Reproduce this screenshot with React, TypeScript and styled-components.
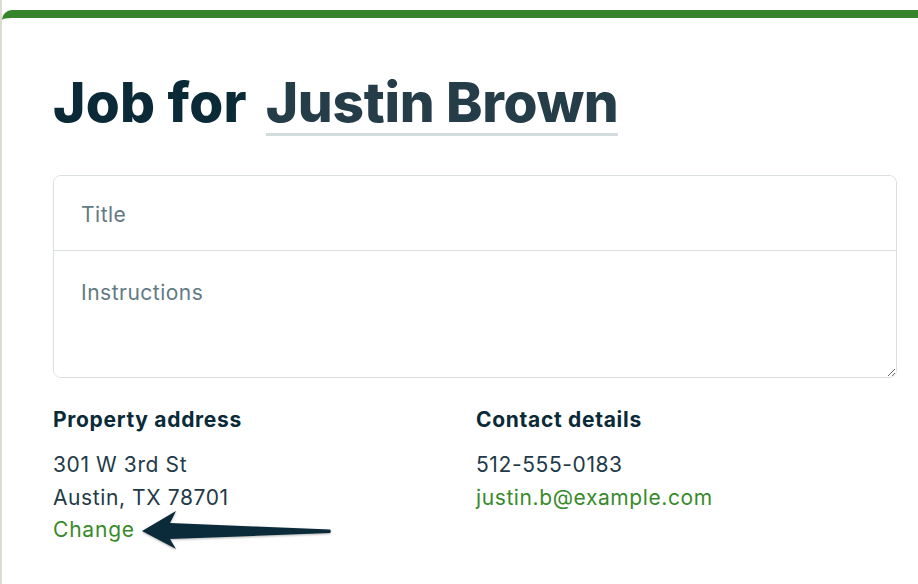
import React from "react";
import styled, { createGlobalStyle } from "styled-components";

const GlobalStyle = createGlobalStyle`
  html, body {
    margin: 0;
    padding: 0;
    background: #ffffff;
  }
  body {
    font-family: Inter, "Noto Sans", "Liberation Sans", sans-serif;
    color: #1f3a48;
  }
  * { box-sizing: border-box; }
`;

const Page = styled.div`
  position: relative;
  min-height: 584px;
  border-left: 2px solid #dddcd3;
  padding-top: 10px;
  overflow: hidden;
`;

const Card = styled.section`
  border-top: 8px solid #36852a;
  border-top-left-radius: 10px;
  padding: 0 21px 40px 51px;
  min-height: 566px;
`;

const Heading = styled.h1`
  display: flex;
  align-items: baseline;
  gap: 19px;
  margin: 53px 0 0;
  font-size: 55px;
  line-height: 1.13;
  font-weight: 800;
  letter-spacing: 0.2px;
  color: #0b2a38;
`;

const ClientName = styled.span`
  color: #253c49;
  letter-spacing: -0.3px;
  border-bottom: 3px solid #d4dddd;
`;

const FieldGroup = styled.div`
  margin-top: 39px;
  border: 1px solid #dadfe0;
  border-radius: 8px;
  display: flex;
  flex-direction: column;
  overflow: hidden;
`;

const TitleInput = styled.input`
  height: 75px;
  border: 0;
  border-bottom: 1px solid #dadfe0;
  padding: 3px 27px 0;
  font: inherit;
  font-size: 21px;
  letter-spacing: 0.5px;
  color: #1f3a48;
  outline: none;
  &::placeholder { color: #627a84; }
`;

const InstructionsInput = styled.textarea`
  height: 126px;
  border: 0;
  padding: 28px 27px 24px;
  font: inherit;
  font-size: 21px;
  letter-spacing: 0.5px;
  line-height: 27px;
  color: #1f3a48;
  outline: none;
  resize: vertical;
  &::placeholder { color: #627a84; }
`;

const Details = styled.div`
  display: grid;
  grid-template-columns: 423px 1fr;
  margin-top: 28px;
`;

const Column = styled.div`
  display: flex;
  flex-direction: column;
`;

const ColumnTitle = styled.h2`
  margin: 0 0 15px;
  font-size: 21px;
  line-height: 28px;
  font-weight: 700;
  letter-spacing: 0.7px;
  color: #0b2a38;
`;

const Line = styled.div<{ $green?: boolean }>`
  font-size: 21px;
  line-height: 32.5px;
  letter-spacing: 0.6px;
  color: ${(p) => (p.$green ? "#378a2b" : "#1f3a48")};
`;

const LinkText = styled.a`
  font-size: 21px;
  line-height: 32.5px;
  letter-spacing: 0.8px;
  color: #378a2b;
  text-decoration: none;
  align-self: flex-start;
`;

const Arrow = styled.svg`
  position: absolute;
  left: 130px;
  top: 500px;
  width: 210px;
  height: 60px;
  overflow: visible;
  filter: drop-shadow(0 1px 1px rgba(0, 0, 0, 0.3));
`;

export default function App() {
  return (
    <>
      <GlobalStyle />
      <Page>
        <Card>
          <Heading>
            <span>Job for</span>
            <ClientName>Justin Brown</ClientName>
          </Heading>
          <FieldGroup>
            <TitleInput placeholder="Title" />
            <InstructionsInput placeholder="Instructions" />
          </FieldGroup>
          <Details>
            <Column>
              <ColumnTitle>Property address</ColumnTitle>
              <Line>301 W 3rd St</Line>
              <Line>Austin, TX 78701</Line>
              <LinkText href="#">Change</LinkText>
            </Column>
            <Column>
              <ColumnTitle>Contact details</ColumnTitle>
              <Line>512-555-0183</Line>
              <Line $green>justin.b@example.com</Line>
            </Column>
          </Details>
        </Card>
        <Arrow viewBox="130 500 210 60">
          <path
            d="M140,531 L174,511 L168,523 L328,529.5 Q329.5,531.2 328,533 L168,539 L174,549 Z"
            fill="#0c2b3a"
          />
        </Arrow>
      </Page>
    </>
  );
}
